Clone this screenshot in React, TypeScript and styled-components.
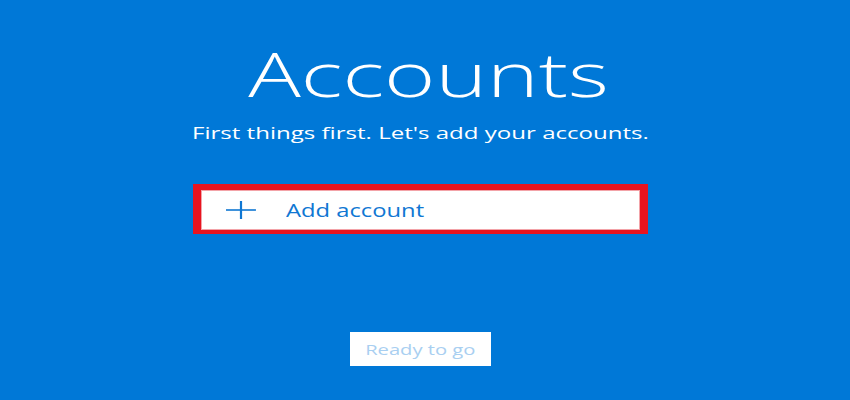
import styled, { createGlobalStyle } from "styled-components";

const Global = createGlobalStyle`
  html, body {
    margin: 0;
    padding: 0;
    background: #0078d7;
  }
  body {
    font-family: "Open Sans", "Liberation Sans", sans-serif;
  }
`;

const Page = styled.div`
  width: 850px;
  height: 400px;
  background: #0078d7;
  display: flex;
  flex-direction: column;
  align-items: center;
  padding-top: 44px;
  padding-right: 10px;
  box-sizing: border-box;
  overflow: hidden;
`;

// the screenshot is stretched sideways, so the text is too
const Stretch = styled.span<{ $sx: number; $origin?: string }>`
  display: inline-block;
  transform: scaleX(${(p) => p.$sx});
  transform-origin: ${(p) => p.$origin || "center"};
  white-space: nowrap;
`;

const Title = styled.h1`
  margin: 0 0 0 18px;
  font-size: 60px;
  line-height: 60px;
  font-weight: 300;
  color: #fff;
`;

const Subtitle = styled.p`
  margin: 20px 0 0;
  font-size: 17px;
  line-height: 17px;
  font-weight: 400;
  color: #fff;
`;

const AddBox = styled.button`
  margin-top: 43px;
  width: 455px;
  height: 50px;
  box-sizing: border-box;
  background: #fff;
  border-style: solid;
  border-color: #e8141f;
  border-width: 6px 8px 4px 8px;
  box-shadow: inset 1px 1px 0 #f3a3a8, inset -1px -1px 0 #f3a3a8;
  display: flex;
  align-items: center;
  padding: 0 0 0 25px;
  gap: 30px;
  cursor: pointer;
  font-family: inherit;
`;

const Label = styled.span`
  font-size: 18px;
  color: #1077d3;
  line-height: 18px;
`;

const ReadyButton = styled.button`
  margin-top: 98px;
  width: 141px;
  height: 34px;
  background: #fff;
  border: none;
  padding: 0;
  font-family: inherit;
  font-size: 14px;
  color: #a9cff1;
  display: flex;
  align-items: center;
  justify-content: center;
`;

const PlusIcon = () => (
  <svg width="30" height="18" viewBox="0 0 30 18">
    <line x1="0" y1="9" x2="30" y2="9" stroke="#1077d3" strokeWidth="1.6" />
    <line x1="15" y1="0" x2="15" y2="18" stroke="#1077d3" strokeWidth="2.2" />
  </svg>
);

export default function App() {
  return (
    <Page>
      <Global />
      <Title>
        <Stretch $sx={1.46}>Accounts</Stretch>
      </Title>
      <Subtitle>
        <Stretch $sx={1.415}>First things first. Let's add your accounts.</Stretch>
      </Subtitle>
      <AddBox>
        <PlusIcon />
        <Label>
          <Stretch $sx={1.32} $origin="left">
            Add account
          </Stretch>
        </Label>
      </AddBox>
      <ReadyButton>
        <Stretch $sx={1.44}>Ready to go</Stretch>
      </ReadyButton>
    </Page>
  );
}
